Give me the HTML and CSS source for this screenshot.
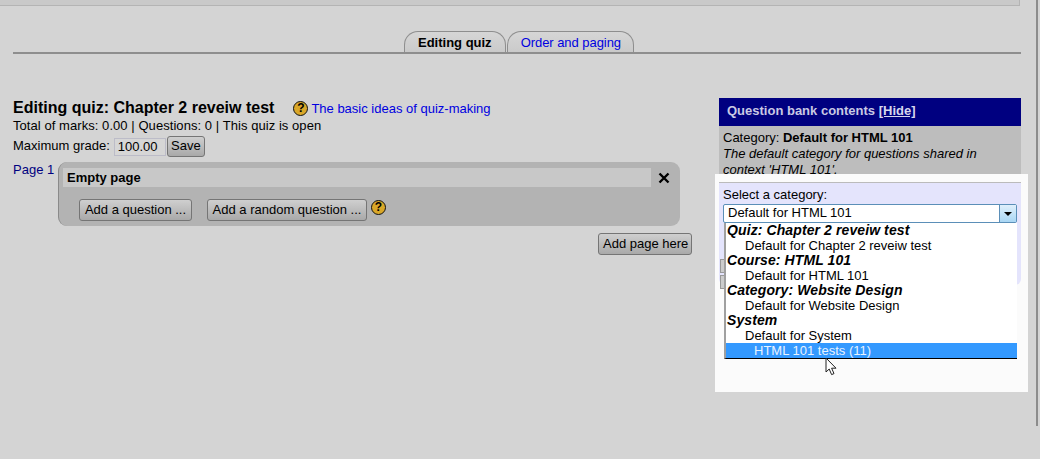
FILE: index.html
```html
<!DOCTYPE html>
<html lang="en">
<head>
<meta charset="UTF-8" />
<title>Editing quiz</title>
<link rel="stylesheet" href="styles.css">
</head>
<body>
<div class="window">
  <div class="content">
    <div class="top-strip"></div>

    <div class="tabs">
      <span class="tab tab-active">Editing quiz</span>
      <a class="tab tab-link" href="#">Order and paging</a>
    </div>

    <div class="columns">
      <div class="editor">
        <div class="title-row">
          <h1>Editing quiz: Chapter 2 reveiw test</h1>
          <span class="help">?</span>
          <a href="#">The basic ideas of quiz-making</a>
        </div>
        <p class="stats">Total of marks: 0.00 | Questions: 0 | This quiz is open</p>
        <div class="grade-row">
          <span class="grade-label">Maximum grade:</span>
          <input class="grade" type="text" value="100.00" />
          <button>Save</button>
        </div>
        <div class="page-row">
          <span class="page-label">Page 1</span>
          <div class="page-box">
            <div class="page-head">
              <div class="page-title">Empty page</div>
              <svg class="close" width="12" height="12" viewBox="0 0 12 12"><path d="M1.5 1.5 L10.5 10.5 M10.5 1.5 L1.5 10.5" stroke="#000" stroke-width="2.4" fill="none"/></svg>
            </div>
            <div class="page-actions">
              <button class="btn-question">Add a question ...</button>
              <button class="btn-random">Add a random question ...</button>
              <span class="help">?</span>
            </div>
          </div>
        </div>
        <div class="add-page"><button>Add page here</button></div>
      </div>

      <div class="bank">
        <div class="bank-head">Question bank contents <a href="#">[Hide]</a></div>
        <div class="bank-info">
          Category: <b>Default for HTML 101</b><br>
          <i>The default category for questions shared in context 'HTML 101'.</i>
        </div>

        <div class="spot">
          <div class="spot-rule"></div>
          <div class="category">
            <label>Select a category:</label>
            <div class="select">
              <span class="select-value">Default for HTML 101</span>
              <span class="select-arrow"></span>
              <ul class="options">
                <li class="group">Quiz: Chapter 2 reveiw test</li>
                <li class="lvl1">Default for Chapter 2 reveiw test</li>
                <li class="group">Course: HTML 101</li>
                <li class="lvl1">Default for HTML 101</li>
                <li class="group">Category: Website Design</li>
                <li class="lvl1">Default for Website Design</li>
                <li class="group">System</li>
                <li class="lvl1">Default for System</li>
                <li class="lvl2 selected">HTML 101 tests (11)</li>
              </ul>
              <svg class="cursor" width="13" height="19" viewBox="0 0 13 19"><path d="M1 1 L1 15 L4.2 12 L6.6 17.6 L9 16.6 L6.6 11.2 L11 11.2 Z" fill="#fff" stroke="#222" stroke-width="1"/></svg>
            </div>
            <div class="stub"></div>
            <div class="stub"></div>
          </div>
        </div>
      </div>
    </div>
  </div>

  <div class="edge"></div>
</div>
</body>
</html>
```

FILE: styles.css
```css
* {
  box-sizing: border-box;
}

body {
  margin: 0;
  background: #d4d4d4;
  color: #000;
  font-family: "Liberation Sans", Arial, sans-serif;
  font-size: 13px;
  line-height: 15px;
  overflow: hidden;
}

a {
  color: #0000e0;
  text-decoration: none;
}

.window {
  display: flex;
  height: 459px;
}

.content {
  width: 1036px;
}

.edge {
  width: 2px;
  height: 426px;
  background: #8c8c8c;
}

.top-strip {
  width: 1020px;
  height: 6px;
  background: #c9c9c9;
  border-bottom: 1px solid #b4b4b4;
  border-right: 1px solid #b4b4b4;
}

/* tabs */
.tabs {
  display: flex;
  justify-content: center;
  align-items: flex-end;
  gap: 1px;
  width: 1008px;
  height: 48px;
  margin-left: 13px;
  padding-left: 4px;
  border-bottom: 2px solid #8e8e8e;
}

.tab {
  height: 21px;
  padding: 3px 13px 0;
  border: 1px solid #8e8e8e;
  border-bottom: none;
  border-radius: 14px 14px 0 0;
  background: linear-gradient(#d6d6d6, #cacaca);
}

.tab-active {
  font-weight: bold;
}

.tab-link {
  padding: 3px 12px 0 13px;
  letter-spacing: -0.05px;
}

.columns {
  display: flex;
  align-items: flex-start;
  gap: 27px;
  padding: 44px 0 0 13px;
  width: 1021px;
}

/* left side */
.editor {
  width: 679px;
}

.title-row {
  display: flex;
  align-items: center;
  height: 20px;
}

h1 {
  margin: 0 19px 0 0;
  font-size: 16px;
  line-height: 20px;
}

.title-row a {
  margin-left: 3px;
}

.help {
  display: inline-block;
  width: 15px;
  height: 15px;
  border: 1px solid #111;
  border-radius: 50%;
  background: #d9a728;
  font-size: 12px;
  font-weight: bold;
  line-height: 13px;
  text-align: center;
}

.stats {
  margin: 0;
  line-height: 15px;
  letter-spacing: 0.06px;
}

.grade-row {
  display: flex;
  align-items: center;
  gap: 1px;
  height: 21px;
  margin-top: 3px;
}

.grade-label {
  padding-bottom: 2px;
}

.grade {
  width: 52px;
  height: 18px;
  margin-left: 3px;
  padding: 0 3px 1px;
  border: 1px solid #bcbcc8;
  background: #d6d6d6;
  font: 13px "Liberation Sans", Arial, sans-serif;
}

button {
  height: 22px;
  padding: 0 4px 2px;
  border: 1px solid #757575;
  border-radius: 3px;
  background: linear-gradient(#cfcfcf, #a9a9a9);
  color: #000;
  font: 13px "Liberation Sans", Arial, sans-serif;
  white-space: nowrap;
}

.grade-row button {
  width: 38px;
  height: 21px;
  padding: 0 0 2px;
}

.page-row {
  display: flex;
  gap: 4px;
  margin-top: 5px;
}

.page-label {
  color: #000080;
  width: 41px;
  white-space: nowrap;
}

.page-box {
  width: 622px;
  height: 64px;
  padding: 6px 10px 0 4px;
  border-left: 1px solid #8a8a8a;
  border-radius: 9px;
  background: #b3b3b3;
}

.page-head {
  display: flex;
  align-items: center;
  justify-content: space-between;
}

.page-title {
  width: 588px;
  height: 19px;
  padding: 2px 4px 0;
  background: #c8c8c8;
  font-weight: bold;
}

.page-actions {
  display: flex;
  align-items: flex-start;
  gap: 15px;
  padding: 12px 0 0 16px;
}

.btn-question {
  width: 113px;
}

.btn-random {
  width: 160px;
}

.page-actions .help {
  margin: 1px 0 0 -11px;
}

.add-page {
  display: flex;
  justify-content: flex-end;
  margin-top: 7px;
}

.add-page button {
  width: 94px;
}

/* question bank */
.bank {
  position: relative;
  width: 302px;
}

.bank-head {
  height: 28px;
  padding: 5px 8px 0;
  background: #000080;
  color: #c9c9e4;
  font-weight: bold;
}

.bank-head a {
  color: #d6d6ee;
  text-decoration: underline;
}

.bank-info {
  height: 50px;
  padding: 4px 4px 0;
  background: #bdbdbd;
  line-height: 16px;
}

/* bright cut-out of the screenshot, lies over the panel */
.spot {
  position: absolute;
  top: 76px;
  left: -4px;
  width: 313px;
  height: 218px;
  padding: 8px 7px 0 4px;
  background: #fbfbfb;
}

.spot-rule {
  height: 1px;
  background: #bbb;
}

.category {
  height: 102px;
  padding: 4px 4px 0;
  border-radius: 0 0 6px 6px;
  background: #e4e4fc;
}

.category label {
  display: block;
}

.select {
  position: relative;
  display: flex;
  justify-content: space-between;
  height: 19px;
  margin-top: 2px;
  border: 1px solid #5b8fb8;
  border-radius: 2px;
  background: #fff;
}

.select-value {
  padding: 0 4px;
}

.select-arrow {
  position: relative;
  width: 17px;
  background: linear-gradient(#e0f0fb, #a9d6f4);
  border-left: 1px solid #5b8fb8;
}

.select-arrow::after {
  content: "";
  position: absolute;
  left: 4px;
  top: 7px;
  border: 4px solid transparent;
  border-top: 4px solid #000;
  border-bottom: none;
}

/* open dropdown list */
.options {
  position: absolute;
  top: 18px;
  left: 0;
  width: 293px;
  margin: 0;
  padding: 0;
  list-style: none;
  background: #fff;
  border-left: 2px solid #a0a0a0;
  border-bottom: 1px solid #000;
}

.options li {
  height: 15px;
  line-height: 15px;
  white-space: nowrap;
}

.group {
  padding-left: 1px;
  font-weight: bold;
  font-style: italic;
  font-size: 14px;
  letter-spacing: 0.1px;
}

.lvl1 {
  padding-left: 19px;
}

.lvl2 {
  padding-left: 28px;
}

.selected {
  background: #3399ff;
  color: #e8f3ff;
}

.cursor {
  position: absolute;
  left: 101px;
  top: 152px;
}

.stub {
  width: 6px;
  height: 14px;
  margin: 2px 0 0 -3px;
  border: 1px solid #999;
  background: #ccc;
}

.select + .stub {
  margin-top: 36px;
}
```
